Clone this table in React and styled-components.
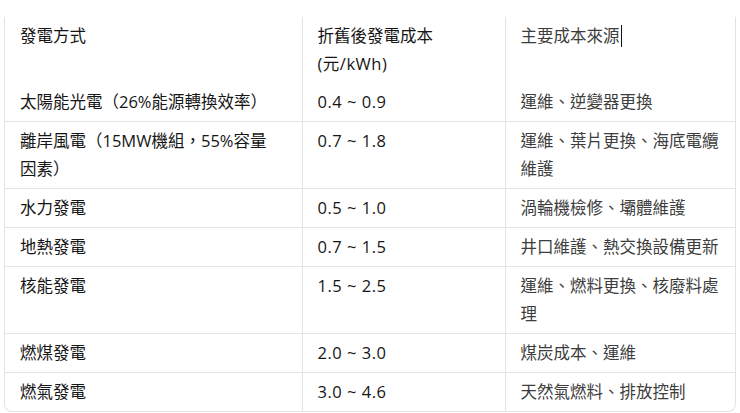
import React from 'react';
import styled, { createGlobalStyle } from 'styled-components';

const GlobalStyle = createGlobalStyle`
  html, body {
    margin: 0;
    padding: 0;
    background: #ffffff;
  }
  body {
    font-family: "Open Sans", "Noto Sans CJK TC", sans-serif;
    font-size: 16.5px;
    color: #1f1f1f;
  }
`;

const Page = styled.div`
  padding: 17px 4px 0;
`;

const Frame = styled.div`
  border: 1px solid #e3e3e3;
  border-top: none;
  border-radius: 0 0 8px 8px;
  overflow: hidden;
`;

const Table = styled.table`
  width: 100%;
  border-collapse: collapse;
  table-layout: fixed;
`;

const Row = styled.tr`
  & + & > td,
  & + & > th {
    border-top: 1px solid #e3e3e3;
  }
`;

const Cell = styled.td`
  padding: 5px ${(p) => (p.$narrow ? '26px' : '12px')} 5px 15px;
  line-height: 28px;
  vertical-align: top;
  text-align: left;
  font-weight: 400;
  letter-spacing: ${(p) => (p.$numeric ? '0.5px' : '0')};
  color: ${(p) => (p.$muted ? '#3d3d3d' : '#161616')};
  & + & {
    border-left: 1px solid #e3e3e3;
  }
`;

const Unit = styled.span`
  letter-spacing: 0.5px;
`;

const Caret = styled.span`
  display: inline-block;
  width: 1px;
  height: 22px;
  margin-left: 1px;
  background: #111;
  vertical-align: -5px;
`;

const rows = [
  ['太陽能光電（26%能源轉換效率）', '0.4 ~ 0.9', '運維、逆變器更換'],
  ['離岸風電（15MW機組，55%容量因素）', '0.7 ~ 1.8', '運維、葉片更換、海底電纜維護'],
  ['水力發電', '0.5 ~ 1.0', '渦輪機檢修、壩體維護'],
  ['地熱發電', '0.7 ~ 1.5', '井口維護、熱交換設備更新'],
  ['核能發電', '1.5 ~ 2.5', '運維、燃料更換、核廢料處理'],
  ['燃煤發電', '2.0 ~ 3.0', '煤炭成本、運維'],
  ['燃氣發電', '3.0 ~ 4.6', '天然氣燃料、排放控制'],
];

export default function App() {
  return (
    <>
      <GlobalStyle />
      <Page lang="zh-Hant">
        <Frame>
          <Table>
            <colgroup>
              <col style={{ width: 297 }} />
              <col style={{ width: 203 }} />
              <col />
            </colgroup>
            <thead>
              <Row>
                <Cell as="th" $narrow>發電方式</Cell>
                <Cell as="th">
                  折舊後發電成本 <Unit>(元/kWh)</Unit>
                </Cell>
                <Cell as="th" $muted>
                  主要成本來源
                  <Caret />
                </Cell>
              </Row>
            </thead>
            <tbody>
              {rows.map(([kind, cost, source]) => (
                <Row key={kind}>
                  <Cell $narrow>{kind}</Cell>
                  <Cell $numeric>{cost}</Cell>
                  <Cell $muted>{source}</Cell>
                </Row>
              ))}
            </tbody>
          </Table>
        </Frame>
      </Page>
    </>
  );
}
